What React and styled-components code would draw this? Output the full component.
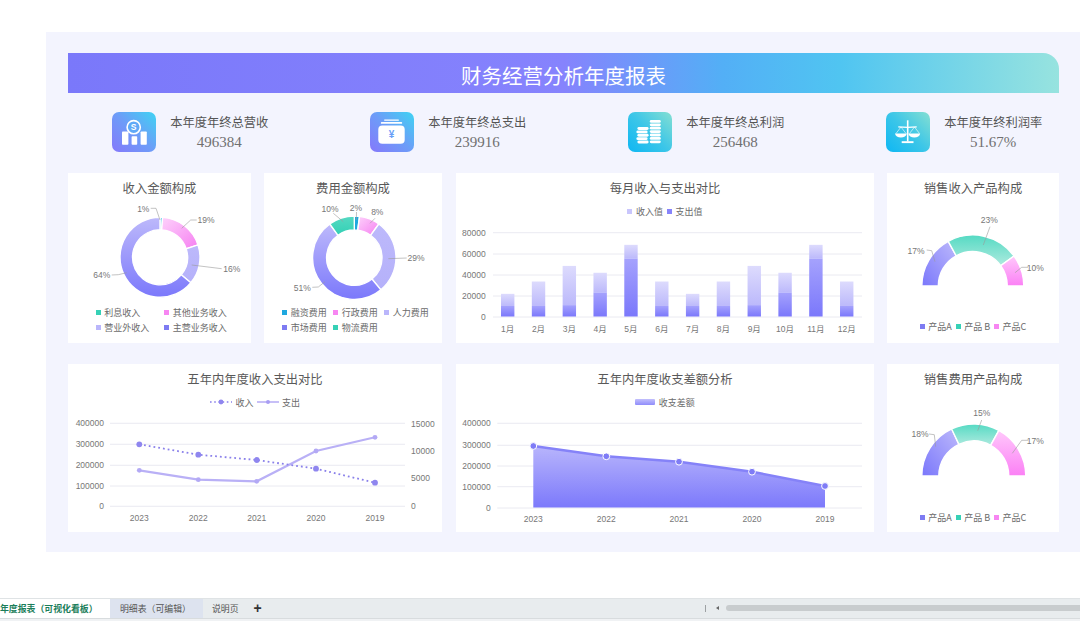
import React from 'react';
import styled, { createGlobalStyle } from 'styled-components';

const FONT = '"Liberation Sans", "Noto Sans CJK SC", sans-serif';

const GlobalStyle = createGlobalStyle`
    html, body {
        margin: 0;
        padding: 0;
        background: #ffffff;
        font-family: ${FONT};
    }
`;

const COLORS = {
    teal: '#36d1b6',
    pink: '#f786f2',
    lavender: '#bab6fb',
    purple: '#7e7bf2',
    blue: '#1fa8df',
};

const kpis = [
    { label: '本年度年终总营收', value: '496384', kind: 'revenue' },
    { label: '本年度年终总支出', value: '239916', kind: 'expense' },
    { label: '本年度年终总利润', value: '256468', kind: 'profit' },
    { label: '本年度年终利润率', value: '51.67%', kind: 'rate' },
];

const monthly = [
    ['1月', 10000, 21500], ['2月', 10000, 33200], ['3月', 10800, 48000], ['4月', 22800, 41500],
    ['5月', 55000, 68000], ['6月', 10000, 33200], ['7月', 10000, 21500], ['8月', 10000, 33200],
    ['9月', 10800, 48000], ['10月', 22800, 41500], ['11月', 55000, 68000], ['12月', 10000, 33200],
];

function polar(cx, cy, radius, deg) {
    const rad = (deg - 90) * Math.PI / 180;
    return [cx + radius * Math.cos(rad), cy + radius * Math.sin(rad)];
}

function sector(cx, cy, R, r, from, to) {
    const [x1, y1] = polar(cx, cy, R, from);
    const [x2, y2] = polar(cx, cy, R, to);
    const [x3, y3] = polar(cx, cy, r, to);
    const [x4, y4] = polar(cx, cy, r, from);
    const large = to - from > 180 ? 1 : 0;
    return `M${x1} ${y1}A${R} ${R} 0 ${large} 1 ${x2} ${y2}L${x3} ${y3}A${r} ${r} 0 ${large} 0 ${x4} ${y4}Z`;
}

function Rings({ cx, cy, R, r, start, span, total, parts }) {
    let angle = start;
    return parts.map((part, idx) => {
        const from = angle;
        angle += span * part.value / total;
        return <path key={idx} d={sector(cx, cy, R, r, from, angle)} fill={part.fill} stroke="#ffffff" strokeWidth="1.4" />;
    });
}

function Callouts({ items }) {
    return items.map((item, idx) => (
        <g key={idx}>
            <Leader points={item.line} />
            <SliceLabel x={item.x} y={item.y}>{item.text}</SliceLabel>
        </g>
    ));
}

function Gradients() {
    const defs = [
        ['gPurple', '#bdb9fb', '#7b78fb', 0, 0, 0, 1],
        ['gPink', '#fdd2fb', '#f67ff1', 0, 0, 1, 1],
        ['gLav', '#bdb9fb', '#b5b1fa', 0, 0, 0, 1],
        ['gTeal', '#56d9c2', '#32d0b5', 0, 0, 0, 1],
        ['gCyan', '#22b4e6', '#5ee0cc', 0, 0, 0, 1],
        ['gGaugeA', '#bdb9fb', '#7a77fb', 1, 0, 0, 1],
        ['gGaugeB', '#55dac3', '#aeeadf', 0, 0, 0, 1],
        ['gGaugeC', '#ffc8fb', '#fb80f5', 0, 0, 0, 1],
        ['gBarTop', '#dddbfd', '#bcb9fb', 0, 0, 0, 1],
        ['gBarLow', '#a5a2fd', '#7b78fb', 0, 0, 0, 1],
        ['gArea', '#b8b5fc', '#7c79fb', 0, 0, 0, 1],
    ];
    return (
        <svg width="0" height="0" style={{ position: 'absolute' }}>
            <defs>
                {defs.map(([id, a, b, x1, y1, x2, y2]) => (
                    <linearGradient key={id} id={id} x1={x1} y1={y1} x2={x2} y2={y2}>
                        <stop offset="0" stopColor={a} />
                        <stop offset="1" stopColor={b} />
                    </linearGradient>
                ))}
            </defs>
        </svg>
    );
}

function KpiIcon({ kind }) {
    if (kind === 'revenue') {
        return (
            <svg width="44" height="40" viewBox="0 0 44 40">
                <circle cx="21.7" cy="15.2" r="6.6" fill="#5fa9f7" stroke="#fff" strokeWidth="1.6" />
                <IconSign x="21.7" y="18.2" $size={8.5} fill="#fff">S</IconSign>
                <rect x="10" y="19.5" width="6.4" height="13.2" rx="0.8" fill="#fff" />
                <rect x="19.6" y="24.3" width="5.6" height="8.4" rx="0.8" fill="#fff" />
                <rect x="28.6" y="19.5" width="6.2" height="13.2" rx="0.8" fill="#fff" />
            </svg>
        );
    }
    if (kind === 'expense') {
        return (
            <svg width="44" height="40" viewBox="0 0 44 40">
                <rect x="14" y="7.4" width="15" height="1.4" rx="0.7" fill="#fff" />
                <rect x="10.8" y="10" width="21.4" height="1.8" rx="0.9" fill="#fff" />
                <rect x="8.3" y="13.4" width="26.4" height="18.4" rx="4" fill="#fff" />
                <IconSign x="21.5" y="26" $size={10} fill="#6aa0f7">¥</IconSign>
            </svg>
        );
    }
    if (kind === 'profit') {
        const tall = [8, 11.4, 14.8, 18.2, 21.6, 25, 28.4];
        const short = [15, 18.4, 21.8, 25.2, 28.6];
        return (
            <svg width="44" height="40" viewBox="0 0 44 40">
                {tall.map((y) => <rect key={y} x="21.8" y={y} width="11" height="2.8" rx="1.4" fill="#fff" />)}
                {short.map((y, i) => <rect key={y} x={i % 2 ? 8.4 : 9.4} y={y} width="11.2" height="2.9" rx="1.4" fill="#fff" />)}
            </svg>
        );
    }
    return (
        <svg width="44" height="40" viewBox="0 0 44 40" fill="none" stroke="#fff">
            <path d="M21.7 8.3V29.5" strokeWidth="1.6" />
            <path d="M12.3 14.8L21.7 15.4L30.7 14.8" strokeWidth="1.3" />
            <path d="M15 15L10 21.5M15 15L20 21.5M28.5 15L23.5 21.5M28.5 15L33.5 21.5" strokeWidth="0.6" />
            <path d="M9 21.5H20.8C20.4 24 18 25.4 14.9 25.4C11.8 25.4 9.4 24 9 21.5Z" fill="#fff" stroke="none" />
            <path d="M22.4 21.5H34.2C33.8 24 31.4 25.4 28.3 25.4C25.2 25.4 22.8 24 22.4 21.5Z" fill="#fff" stroke="none" />
            <rect x="15.7" y="29.2" width="11.8" height="1.9" fill="#fff" stroke="none" />
        </svg>
    );
}

function IncomeDonut() {
    return (
        <ChartSvg width="183" height="102" viewBox="68 203 183 102">
            <Rings cx={160} cy={257.3} R={40} r={27.5} start={0} span={360} total={100} parts={[
                { value: 1, fill: 'url(#gCyan)' },
                { value: 19, fill: 'url(#gPink)' },
                { value: 16, fill: 'url(#gLav)' },
                { value: 64, fill: 'url(#gPurple)' },
            ]} />
            <Callouts items={[
                { text: '1%', x: 143.3, y: 208.7, line: '150.7,208.3 156,208.3 160,220' },
                { text: '19%', x: 206, y: 220, line: '196.7,220 190.7,220 181.7,228.3' },
                { text: '16%', x: 231.7, y: 268.7, line: '221.7,268.7 191.7,265' },
                { text: '64%', x: 101.7, y: 275, line: '111.7,275 118.3,274.7 126.7,272.7' },
            ]} />
        </ChartSvg>
    );
}

function CostDonut() {
    return (
        <ChartSvg width="178" height="102" viewBox="264 203 178 102">
            <Rings cx={354.3} cy={257.7} R={41.7} r={27.7} start={0} span={360} total={100} parts={[
                { value: 2, fill: COLORS.blue },
                { value: 8, fill: 'url(#gPink)' },
                { value: 29, fill: 'url(#gLav)' },
                { value: 51, fill: 'url(#gPurple)' },
                { value: 10, fill: 'url(#gTeal)' },
            ]} />
            <Callouts items={[
                { text: '2%', x: 356, y: 208, line: '356.5,212 356.3,220' },
                { text: '8%', x: 377.3, y: 212.3, line: '375,218.3 370,223.3' },
                { text: '10%', x: 330, y: 208.7, line: '333.3,213.3 343.3,221.7' },
                { text: '29%', x: 416, y: 258, line: '406.7,258 388.3,258.7' },
                { text: '51%', x: 302.3, y: 287.7, line: '312.3,287.3 318.3,287 325,281.7' },
            ]} />
        </ChartSvg>
    );
}

function Gauge({ offsetY, cx, cy, R, r, values, callouts }) {
    const fills = ['url(#gGaugeA)', 'url(#gGaugeB)', 'url(#gGaugeC)'];
    const total = values[0] + values[1] + values[2];
    return (
        <ChartSvg width="172" height="115" viewBox={`887 ${offsetY} 172 115`}>
            <Rings cx={cx} cy={cy} R={R} r={r} start={-90} span={180} total={total}
                parts={values.map((value, idx) => ({ value, fill: fills[idx] }))} />
            <Callouts items={callouts} />
        </ChartSvg>
    );
}

function MonthlyBars() {
    const gridY = [232.7, 254, 275, 296, 317];
    const ticks = ['80000', '60000', '40000', '20000', '0'];
    const scale = 84.3 / 80000;
    return (
        <ChartSvg width="418" height="124" viewBox="456 219 418 124">
            {gridY.map((y, idx) => (
                <g key={y}>
                    <GridLine x1="493" x2="862" y1={y} y2={y} />
                    <AxisLabel x="485.7" y={y} textAnchor="end">{ticks[idx]}</AxisLabel>
                </g>
            ))}
            {monthly.map(([name, low, top], idx) => {
                const cx = 507.7 + idx * 30.82;
                return (
                    <g key={name}>
                        <rect x={cx - 6.7} y={316.5 - top * scale} width="13.4" height={(top - low) * scale} fill="url(#gBarTop)" />
                        <rect x={cx - 6.7} y={316.5 - low * scale} width="13.4" height={low * scale} fill="url(#gBarLow)" />
                        <AxisLabel x={cx} y="328.7" textAnchor="middle">{name}</AxisLabel>
                    </g>
                );
            })}
        </ChartSvg>
    );
}

function YearLines() {
    const gridY = [423.3, 444.3, 465.3, 486, 506.3];
    const left = ['400000', '300000', '200000', '100000', '0'];
    const right = [['15000', 424], ['10000', 451], ['5000', 478.3], ['0', 506.3]];
    const xs = [139.3, 198.3, 256.7, 316, 375];
    const years = ['2023', '2022', '2021', '2020', '2019'];
    const income = [444.3, 454.7, 460, 468.7, 482.7];
    const cost = [470.3, 479.7, 481.3, 451, 437.3];
    return (
        <ChartSvg width="374" height="122" viewBox="68 410 374 122">
            {gridY.map((y, idx) => (
                <g key={y}>
                    <GridLine x1="110" x2="405" y1={y} y2={y} />
                    <AxisLabel x="104" y={y} textAnchor="end">{left[idx]}</AxisLabel>
                </g>
            ))}
            {right.map(([text, y]) => <AxisLabel key={text} x="411" y={y}>{text}</AxisLabel>)}
            <polyline points={xs.map((x, i) => `${x},${cost[i]}`).join(' ')} fill="none" stroke="#b9b0f6" strokeWidth="2.2" />
            <polyline points={xs.map((x, i) => `${x},${income[i]}`).join(' ')} fill="none" stroke="#8a80ea" strokeWidth="1.8" strokeDasharray="1.8 3" />
            {xs.map((x, i) => (
                <g key={x}>
                    <circle cx={x} cy={cost[i]} r="2.4" fill="#b3a9f5" />
                    <circle cx={x} cy={income[i]} r="2.9" fill="#8f86ef" />
                    <AxisLabel x={x} y="517.7" textAnchor="middle">{years[i]}</AxisLabel>
                </g>
            ))}
        </ChartSvg>
    );
}

function YearArea() {
    const gridY = [423.3, 445.3, 466, 486.7, 508];
    const ticks = ['400000', '300000', '200000', '100000', '0'];
    const xs = [533.3, 606.3, 679, 752, 825];
    const years = ['2023', '2022', '2021', '2020', '2019'];
    const ys = [446, 456.3, 461.7, 471.7, 486];
    const line = xs.map((x, i) => `${x},${ys[i]}`).join(' ');
    return (
        <ChartSvg width="418" height="122" viewBox="456 410 418 122">
            {gridY.map((y, idx) => (
                <g key={y}>
                    <GridLine x1="497.3" x2="862" y1={y} y2={y} />
                    <AxisLabel x="490.7" y={y} textAnchor="end">{ticks[idx]}</AxisLabel>
                </g>
            ))}
            <polygon points={`533.3,507.5 ${line} 825,507.5`} fill="url(#gArea)" />
            <polyline points={line} fill="none" stroke="#8582f8" strokeWidth="2.4" />
            {xs.map((x, i) => (
                <g key={x}>
                    <circle cx={x} cy={ys[i]} r="3.4" fill="#7f7cf6" stroke="#ffffff" strokeWidth="1" />
                    <AxisLabel x={x} y="519.3" textAnchor="middle">{years[i]}</AxisLabel>
                </g>
            ))}
        </ChartSvg>
    );
}

function LegendEntry({ color, children }) {
    return (
        <Entry>
            <Swatch $color={color} />
            {children}
        </Entry>
    );
}

function ProductLegend() {
    return (
        <LegendRow $gap={4}>
            <LegendEntry color={COLORS.purple}>产品A</LegendEntry>
            <LegendEntry color={COLORS.teal}>产品 B</LegendEntry>
            <LegendEntry color={COLORS.pink}>产品C</LegendEntry>
        </LegendRow>
    );
}

function App() {
    return (
        <Page>
            <GlobalStyle />
            <Gradients />
            <Panel>
                <Banner>财务经营分析年度报表</Banner>
                <KpiRow>
                    {kpis.map((kpi, idx) => (
                        <Kpi key={kpi.kind}>
                            <IconTile $cool={idx > 1}><KpiIcon kind={kpi.kind} /></IconTile>
                            <KpiText>
                                <KpiLabel>{kpi.label}</KpiLabel>
                                <KpiValue>{kpi.value}</KpiValue>
                            </KpiText>
                        </Kpi>
                    ))}
                </KpiRow>
                <Dashboard>
                    <Card>
                        <CardTitle>收入金额构成</CardTitle>
                        <IncomeDonut />
                        <GridLegend $columns="68.5px 68.5px" $pad={27.7}>
                            <LegendEntry color={COLORS.teal}>利息收入</LegendEntry>
                            <LegendEntry color={COLORS.pink}>其他业务收入</LegendEntry>
                            <LegendEntry color={COLORS.lavender}>营业外收入</LegendEntry>
                            <LegendEntry color={COLORS.purple}>主营业务收入</LegendEntry>
                        </GridLegend>
                    </Card>
                    <Card>
                        <CardTitle>费用金额构成</CardTitle>
                        <CostDonut />
                        <GridLegend $columns="51px 51px 51px" $pad={18.3}>
                            <LegendEntry color={COLORS.blue}>融资费用</LegendEntry>
                            <LegendEntry color={COLORS.pink}>行政费用</LegendEntry>
                            <LegendEntry color={COLORS.lavender}>人力费用</LegendEntry>
                            <LegendEntry color={COLORS.purple}>市场费用</LegendEntry>
                            <LegendEntry color={COLORS.teal}>物流费用</LegendEntry>
                        </GridLegend>
                    </Card>
                    <WideCard>
                        <CardTitle>每月收入与支出对比</CardTitle>
                        <LegendRow $gap={4}>
                            <LegendEntry color="#c9c6fc">收入值</LegendEntry>
                            <LegendEntry color="#8784fb">支出值</LegendEntry>
                        </LegendRow>
                        <MonthlyBars />
                    </WideCard>
                    <Card>
                        <CardTitle>销售收入产品构成</CardTitle>
                        <Gauge offsetY={203} cx={972.8} cy={286} R={51} r={34.5} values={[17, 23, 10]} callouts={[
                            { text: '23%', x: 989.3, y: 220, line: '990,226.7 983.3,245' },
                            { text: '17%', x: 916, y: 251, line: '926.7,250 931.7,250.7 935,261.7' },
                            { text: '10%', x: 1035.3, y: 267.7, line: '1028,267.3 1021.7,267.3 1015,272.7' },
                        ]} />
                        <ProductLegend />
                    </Card>
                    <TwoColumnCard>
                        <CardTitle>五年内年度收入支出对比</CardTitle>
                        <LegendRow $gap={3}>
                            <Entry>
                                <LineKey width="22" height="8" viewBox="0 0 22 8">
                                    <path d="M0 4H22" stroke="#8a80ea" strokeWidth="1.6" strokeDasharray="1.6 2.6" />
                                    <circle cx="11" cy="4" r="2.4" fill="#8f86ef" />
                                </LineKey>
                                收入
                            </Entry>
                            <Entry>
                                <LineKey width="22" height="8" viewBox="0 0 22 8">
                                    <path d="M0 4H22" stroke="#b9b0f6" strokeWidth="1.6" />
                                    <circle cx="11" cy="4" r="2" fill="#a89df3" />
                                </LineKey>
                                支出
                            </Entry>
                        </LegendRow>
                        <YearLines />
                    </TwoColumnCard>
                    <WideCard>
                        <CardTitle>五年内年度收支差额分析</CardTitle>
                        <LegendRow $gap={4}>
                            <Entry>
                                <AreaKey />
                                收支差额
                            </Entry>
                        </LegendRow>
                        <YearArea />
                    </WideCard>
                    <Card>
                        <CardTitle>销售费用产品构成</CardTitle>
                        <Gauge offsetY={394} cx={973.8} cy={476} R={52} r={35} values={[18, 15, 17]} callouts={[
                            { text: '15%', x: 981.7, y: 412.7, line: '981.7,420 977.7,430.7' },
                            { text: '18%', x: 920, y: 434, line: '929,434 934.3,434.7 935.7,446.7' },
                            { text: '17%', x: 1035.3, y: 441, line: '1028.3,440.3 1021.7,440.3 1012.3,453.3' },
                        ]} />
                        <ProductLegend />
                    </Card>
                </Dashboard>
            </Panel>
            <SheetBar>
                <ActiveTab>年度报表（可视化看板）</ActiveTab>
                <SheetTab>明细表（可编辑）</SheetTab>
                <PlainTab>说明页</PlainTab>
                <AddTab>+</AddTab>
                <ScrollArea>
                    <ScrollDivider />
                    <ScrollArrow />
                    <ScrollThumb />
                </ScrollArea>
            </SheetBar>
            <StatusStrip />
        </Page>
    );
}

const Page = styled.div`
    width: 1080px;
    height: 621px;
    overflow: hidden;
    display: flex;
    flex-direction: column;
    background: #ffffff;
`;

const Panel = styled.main`
    width: 1034px;
    height: 520px;
    flex: none;
    box-sizing: border-box;
    margin: 32px 0 0 46px;
    padding: 21px 21px 0 22px;
    background: #f3f4fe;
`;

const Banner = styled.h1`
    margin: 0;
    height: 40px;
    line-height: 48px;
    text-align: center;
    font-size: 20.5px;
    font-weight: 400;
    color: #ffffff;
    border-top-right-radius: 16px;
    background: linear-gradient(90deg, #7a78fa 0%, #8683fd 50%, #53aff6 66%, #50c5f1 78%, #97e3df 100%);
`;

const KpiRow = styled.section`
    display: grid;
    grid-template-columns: repeat(4, 258px);
    padding: 18.5px 0 0 43.7px;
    height: 40px;
`;

const Kpi = styled.div`
    display: flex;
    align-items: center;
    gap: 14.5px;
`;

const IconTile = styled.div`
    width: 44px;
    height: 40px;
    border-radius: 7px;
    background: ${(props) => props.$cool
        ? 'linear-gradient(45deg, #0eb7f3 0%, #3cc6e8 50%, #85dfd2 100%)'
        : 'linear-gradient(45deg, #8578fb 0%, #6d9cf8 50%, #3fd3f3 100%)'};
`;

const IconSign = styled.text`
    font-family: ${FONT};
    font-size: ${(props) => props.$size}px;
    font-weight: 700;
    text-anchor: middle;
`;

const KpiText = styled.div`
    text-align: center;
    color: #555555;
`;

const KpiLabel = styled.div`
    font-family: "Noto Sans CJK SC", sans-serif;
    font-size: 12.25px;
    line-height: 20px;
    white-space: nowrap;
`;

const KpiValue = styled.div`
    font-family: "Liberation Serif", serif;
    font-size: 15px;
    line-height: 20px;
    color: #707070;
`;

const Dashboard = styled.section`
    display: grid;
    grid-template-columns: 183px 178px 419px 172px;
    grid-template-rows: 170px 168px;
    column-gap: 13px;
    row-gap: 21px;
    margin-top: 21.5px;
`;

const Card = styled.article`
    display: flex;
    flex-direction: column;
    background: #ffffff;
    min-width: 0;
`;

const WideCard = styled(Card)`
    margin-left: 1px;
`;

const TwoColumnCard = styled(Card)`
    grid-column: span 2;
`;

const CardTitle = styled.h2`
    margin: 0;
    height: 30px;
    flex: none;
    line-height: 30px;
    text-align: center;
    font-family: "Noto Sans CJK SC", sans-serif;
    font-size: 12.3px;
    font-weight: 400;
    color: #595959;
`;

const ChartSvg = styled.svg`
    display: block;
    flex: none;
`;

const GridLine = styled.line`
    stroke: #e5e5ed;
    stroke-width: 0.8;
`;

const AxisLabel = styled.text`
    font-family: ${FONT};
    font-size: 8.5px;
    fill: #777777;
    dominant-baseline: central;
`;

const SliceLabel = styled.text`
    font-family: ${FONT};
    font-size: 8.5px;
    fill: #777777;
    text-anchor: middle;
    dominant-baseline: central;
`;

const Leader = styled.polyline`
    fill: none;
    stroke: #9a9a9a;
    stroke-width: 0.6;
`;

const LegendRow = styled.div`
    display: flex;
    flex: none;
    justify-content: center;
    align-items: center;
    gap: ${(props) => props.$gap}px;
    height: 16px;
`;

const GridLegend = styled.div`
    display: grid;
    grid-template-columns: ${(props) => props.$columns};
    grid-auto-rows: 15px;
    padding-left: ${(props) => props.$pad}px;
`;

const Entry = styled.span`
    display: inline-flex;
    align-items: center;
    gap: 3.5px;
    font-family: "Noto Sans CJK SC", sans-serif;
    font-size: 9px;
    line-height: 15px;
    color: #6b6b6b;
    white-space: pre;
`;

const Swatch = styled.i`
    width: 5px;
    height: 5px;
    flex: none;
    background: ${(props) => props.$color};
`;

const LineKey = styled.svg`
    display: block;
`;

const AreaKey = styled.i`
    width: 20px;
    height: 6px;
    border-radius: 1px;
    background: linear-gradient(#c2bffc, #8f8cfb);
`;

const SheetBar = styled.footer`
    display: flex;
    flex: none;
    align-items: stretch;
    margin-top: 45.5px;
    height: 19px;
    font-family: "Noto Sans CJK SC", sans-serif;
    font-size: 8.9px;
    line-height: 19px;
    color: #555555;
    background: #e8ecee;
    border-top: 1px solid #dfe3e5;
    border-bottom: 1px solid #d8dcde;
`;

const ActiveTab = styled.div`
    width: 110px;
    flex: none;
    font-weight: 700;
    color: #1b7e5a;
    background: #ffffff;
    white-space: nowrap;
`;

const SheetTab = styled.div`
    width: 93px;
    flex: none;
    box-sizing: border-box;
    padding-left: 10px;
    background: #dde3ef;
    white-space: nowrap;
`;

const PlainTab = styled.div`
    width: 47px;
    flex: none;
    box-sizing: border-box;
    padding-left: 9px;
`;

const AddTab = styled.div`
    font-family: "Liberation Sans", sans-serif;
    font-size: 14px;
    font-weight: 700;
    color: #333333;
    width: 15px;
    text-align: center;
`;

const ScrollArea = styled.div`
    display: flex;
    align-items: center;
    margin-left: 440px;
    flex: 1;
    min-width: 0;
`;

const ScrollDivider = styled.i`
    width: 1px;
    height: 7px;
    background: #9da1a3;
`;

const ScrollArrow = styled.i`
    width: 0;
    height: 0;
    margin-left: 10px;
    border-style: solid;
    border-width: 2.5px 3px 2.5px 0;
    border-color: transparent #666666 transparent transparent;
`;

const ScrollThumb = styled.i`
    height: 6px;
    flex: 1;
    margin-left: 7px;
    border-radius: 3px 0 0 3px;
    background: #c8ccce;
`;

const StatusStrip = styled.div`
    flex: 1;
    background: #f0f2f4;
`;

export default App;
